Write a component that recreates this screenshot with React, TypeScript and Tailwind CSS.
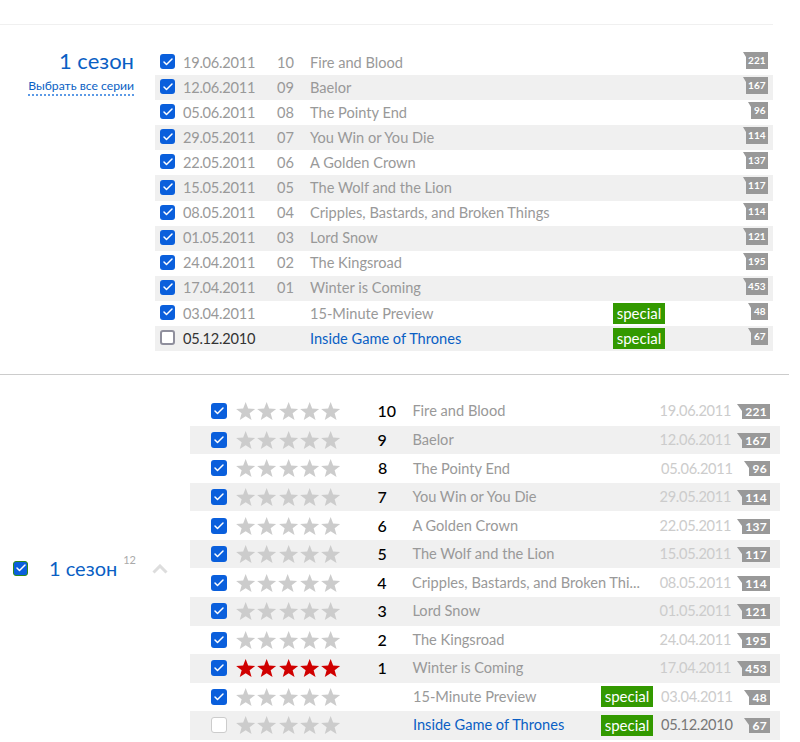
import { Check } from "lucide-react";

const EPISODES = [
  { date: "19.06.2011", num: "10", title: "Fire and Blood", count: 221 },
  { date: "12.06.2011", num: "09", title: "Baelor", count: 167 },
  { date: "05.06.2011", num: "08", title: "The Pointy End", count: 96 },
  { date: "29.05.2011", num: "07", title: "You Win or You Die", count: 114 },
  { date: "22.05.2011", num: "06", title: "A Golden Crown", count: 137 },
  { date: "15.05.2011", num: "05", title: "The Wolf and the Lion", count: 117 },
  { date: "08.05.2011", num: "04", title: "Cripples, Bastards, and Broken Things", count: 114 },
  { date: "01.05.2011", num: "03", title: "Lord Snow", count: 121 },
  { date: "24.04.2011", num: "02", title: "The Kingsroad", count: 195 },
  { date: "17.04.2011", num: "01", title: "Winter is Coming", count: 453 },
  { date: "03.04.2011", num: "", title: "15-Minute Preview", count: 48, special: true },
  { date: "05.12.2010", num: "", title: "Inside Game of Thrones", count: 67, special: true, unseen: true },
];

function Box({ on, size = "w-[15px] h-[15px]", green, offBorder = "border-2 border-[#8f8f9d]" }: { on: boolean; size?: string; green?: boolean; offBorder?: string }) {
  if (!on) {
    return <span className={`${size} block shrink-0 rounded-[3px] ${offBorder} bg-white`} />;
  }
  return (
    <span className={`${size} shrink-0 rounded-[3px] bg-[#0a5fdc] flex items-center justify-center ${green ? "border border-[#2d8a1a]" : ""}`}>
      <Check size={12} strokeWidth={3} className="text-white" />
    </span>
  );
}

function Bubble({ count, big }: { count: number; big?: boolean }) {
  return (
    <span className={big ? "flex items-start mt-[1px]" : "flex items-start self-start pt-[2px]"}>
      <svg width={big ? 5 : 3} height={big ? 7 : 5} viewBox="0 0 6 9" preserveAspectRatio="none" className="block">
        <path d="M0 0 L6 0 L6 9 Z" fill="#999999" />
      </svg>
      <span
        className={
          big
            ? "h-[15px] px-[3px] bg-[#999999] text-white text-[12px] font-bold leading-[15px] tracking-[0.3px]"
            : "h-[17px] px-[2.5px] bg-[#999999] text-white text-[10px] font-bold leading-[17px]"
        }
      >
        {count}
      </span>
    </span>
  );
}

function Special() {
  return (
    <span className="bg-[#339900] text-white text-[15px] leading-[20px] h-[21px] w-[52px] text-center block">special</span>
  );
}

function Star({ red }: { red: boolean }) {
  return (
    <svg viewBox="0 0 21 20" className="block w-[21.3px] h-[20px]">
      <path
        d="M10.5 1 L13 7.6 L20 7.9 L14.5 12.3 L16.4 19 L10.5 15.2 L4.6 19 L6.5 12.3 L1 7.9 L8 7.6 Z"
        fill={red ? "#d00000" : "#cccccc"}
      />
    </svg>
  );
}

function TopTable() {
  return (
    <div className="w-[618px] ml-[21px]">
      {EPISODES.map((e, i) => (
        <div key={e.date} className={`h-[25.1px] flex items-center text-[14.6px] ${i % 2 ? "bg-[#f0f0f0]" : ""}`}>
          <span className="w-[28px] pl-[5px] -mt-[2px]">
            <Box on={!e.unseen} />
          </span>
          <span className={`w-[94px] tracking-[-0.25px] ${e.unseen ? "text-[#333333]" : "text-[#999999]"}`}>{e.date}</span>
          <span className="w-[33px] text-[#999999]">{e.num}</span>
          <span className={`w-[303px] ${e.unseen ? "text-[#0a5fc4]" : "text-[#999999]"}`}>{e.title}</span>
          <span className="w-[52px]">{e.special && <Special />}</span>
          <span className="flex-1 self-stretch flex justify-end pr-[5px]">
            <Bubble count={e.count} />
          </span>
        </div>
      ))}
    </div>
  );
}

function BottomTable() {
  return (
    <div className="w-[590px]">
      {EPISODES.map((e, i) => (
        <div key={e.date} className={`h-[28.55px] flex items-center text-[14.6px] ${i % 2 ? "bg-[#f0f0f0]" : ""}`}>
          <span className="w-[45px] pl-[21px]">
            <Box on={!e.unseen} size="w-[16px] h-[16px]" offBorder="border border-[#cccccc]" />
          </span>
          <span className="w-[110px] flex">
            {[0, 1, 2, 3, 4].map((s) => (
              <Star key={s} red={i === 9} />
            ))}
          </span>
          <span className="w-[68px] pl-[33px] text-[16px] font-medium text-black">{e.num.replace(/^0/, "")}</span>
          <span className={`w-[188px] whitespace-nowrap ${e.unseen ? "text-[#0a5fc4]" : "text-[#999999]"}`}>
            {e.title === "Cripples, Bastards, and Broken Things" ? "Cripples, Bastards, and Broken Thi..." : e.title}
          </span>
          <span className="w-[60px]">{e.special && <Special />}</span>
          <span className={`w-[78px] tracking-[-0.3px] ${e.unseen ? "text-[#777777]" : "text-[#cccccc]"}`}>{e.date}</span>
          <span className="flex-1 flex justify-end pr-[10px]">
            <Bubble count={e.count} big />
          </span>
        </div>
      ))}
    </div>
  );
}

export default function App() {
  return (
    <div className="w-[800px] h-[742px] bg-white overflow-hidden font-['Lato','Roboto',sans-serif]">
      <div className="h-[24px]" />
      <div className="w-[773px] border-t border-[#f0f0f0]" />

      <div className="flex pt-[25px]">
        <div className="w-[134px] -mt-[2px] flex flex-col items-end shrink-0">
          <span className="text-[22px] leading-[26px] text-[#0a5fc4]">1 сезон</span>
          <span className="mt-[3px] text-[12.2px] leading-[17px] text-[#0a5fc4] border-b-2 border-dotted border-[#5c9ae6]">Выбрать все серии</span>
        </div>
        <TopTable />
      </div>

      <div className="h-[23px]" />
      <div className="w-[789px] border-t border-[#cccccc]" />

      <div className="flex pt-[22px]">
        <div className="w-[190px] shrink-0 flex items-center pl-[13px]">
          <Box on green size="w-[15px] h-[15px]" />
          <span className="ml-[21px] text-[20px] text-[#0a5fc4]">1 сезон</span>
          <sup className="ml-[6px] -mt-[6px] text-[11px] text-[#aaaaaa]">12</sup>
          <svg width="16" height="10" viewBox="0 0 16 10" className="ml-[16px] mt-[1px] block">
            <path d="M1.5 8.5 L8 2 L14.5 8.5" fill="none" stroke="#dddddd" strokeWidth="3" />
          </svg>
        </div>
        <BottomTable />
      </div>
    </div>
  );
}
